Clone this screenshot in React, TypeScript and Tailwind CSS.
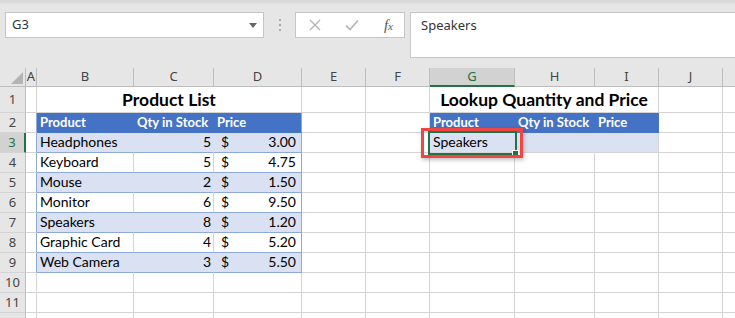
import React from "react";
import clsx from "clsx";

const rGray = "border-r-[#d4d4d4]";
const rBlue = "border-r-[#8ea9db]";
const rNone = "border-r-transparent";
const bGray = "border-b-[#d4d4d4]";
const bBlue = "border-b-[#8ea9db]";
const bNone = "border-b-transparent";

const band = "bg-[#d9e1f2]";
const head = "bg-[#4472c4] text-white font-bold";
const headSize = "text-[13px] leading-[18px]";
const titleSize = "text-[17.5px] leading-[22px]";

const products: [string, number, string][] = [
  ["Headphones", 5, "3.00"],
  ["Keyboard", 5, "4.75"],
  ["Mouse", 2, "1.50"],
  ["Monitor", 6, "9.50"],
  ["Speakers", 8, "1.20"],
  ["Graphic Card", 4, "5.20"],
  ["Web Camera", 3, "5.50"],
];

type CellProps = {
  w: string;
  r?: string;
  b?: string;
  size?: string;
  cls?: string;
  children?: React.ReactNode;
};

const Cell = ({ w, r = rGray, b = bGray, size = "text-[14px] leading-[18px]", cls, children }: CellProps) => (
  <div
    className={clsx(
      "h-full shrink-0 border-r border-b flex items-end pb-[1px] text-black whitespace-nowrap overflow-hidden",
      w,
      r,
      b,
      size,
      cls
    )}
  >
    {children}
  </div>
);

const RowHead = ({ n, selected }: { n?: number; selected?: boolean }) => (
  <div
    className={clsx(
      "h-full w-[26px] shrink-0 border-b border-b-[#d4d4d4] flex items-center justify-center text-[13px] font-['Noto_Sans',sans-serif]",
      selected
        ? "bg-[#d2d2d2] border-r-2 border-r-[#217346] text-[#217346]"
        : "bg-[#e6e6e6] border-r border-r-[#bdbdbd] text-[#444]"
    )}
  >
    {n}
  </div>
);

const Row = ({
  n,
  h = "h-[20px]",
  selected,
  children,
}: {
  n?: number;
  h?: string;
  selected?: boolean;
  children: React.ReactNode;
}) => (
  <div className={clsx("flex", h)}>
    <RowHead n={n} selected={selected} />
    {children}
  </div>
);

// empty cells J and the edge of K
const Tail = () => (
  <>
    <Cell w="w-[64px]" />
    <Cell w="w-[40px]" />
  </>
);

const colHeads = [
  { k: "A", w: "w-[11px]" },
  { k: "B", w: "w-[97px]" },
  { k: "C", w: "w-[80px]" },
  { k: "D", w: "w-[88px]" },
  { k: "E", w: "w-[64px]" },
  { k: "F", w: "w-[64px]" },
  { k: "G", w: "w-[85px]" },
  { k: "H", w: "w-[80px]" },
  { k: "I", w: "w-[64px]" },
  { k: "J", w: "w-[64px]" },
  { k: "", w: "w-[40px]" },
];

export default function App() {
  return (
    <div className="relative w-[735px] h-[318px] overflow-hidden bg-white font-['Lato',sans-serif]">
      {/* formula bar */}
      <div className="h-[68px] bg-[#e6e6e6] border-t-[3px] border-t-[#d9d9d9] flex items-start pt-[9px] pl-[5px] font-['Noto_Sans',sans-serif]">
        <div className="w-[259px] h-[26px] bg-white border border-[#c6c6c6] flex items-center justify-between pl-[6px] pr-[6px]">
          <span className="text-[13px] text-[#333]">G3</span>
          <svg width="8" height="5" viewBox="0 0 8 5">
            <path d="M0 0h8L4 5z" fill="#666" />
          </svg>
        </div>
        <div className="w-[31px] h-[26px] flex flex-col items-center justify-center gap-[3px]">
          <div className="w-[2px] h-[2px] bg-[#aaa]" />
          <div className="w-[2px] h-[2px] bg-[#aaa]" />
          <div className="w-[2px] h-[2px] bg-[#aaa]" />
        </div>
        <div className="w-[110px] h-[26px] bg-white border border-[#c6c6c6] flex items-center justify-between pl-[13px] pr-[11px]">
          <svg width="12" height="12" viewBox="0 0 12 12">
            <path d="M1 1l10 10M11 1L1 11" stroke="#b4b4b4" strokeWidth="1.3" />
          </svg>
          <svg width="14" height="12" viewBox="0 0 14 12">
            <path d="M1 6.5l4 4L13 1.5" stroke="#b4b4b4" strokeWidth="1.6" fill="none" />
          </svg>
          <span className="font-['Liberation_Serif',serif] italic text-[15px] text-[#555] leading-none">
            f<span className="text-[11px]">x</span>
          </span>
        </div>
        <div className="ml-[5px] flex-1 h-[46px] bg-white border border-r-0 border-[#c6c6c6] pl-[10px] pt-[3px] text-[13px] text-[#333]">
          Speakers
        </div>
      </div>

      {/* column headers */}
      <div className="flex h-[19px] bg-[#e6e6e6] font-['Noto_Sans',sans-serif] text-[13px] text-[#444]">
        <div className="w-[26px] shrink-0 h-full border-r border-b border-[#bdbdbd] flex items-end justify-end pr-[2px] pb-[2px]">
          <svg width="12" height="12" viewBox="0 0 12 12">
            <path d="M12 0v12H0z" fill="#b4b4b4" />
          </svg>
        </div>
        {colHeads.map((c) => (
          <div
            key={c.w + c.k}
            className={clsx(
              "h-full shrink-0 border-r border-r-[#bdbdbd] flex items-center justify-center",
              c.w,
              c.k === "G"
                ? "bg-[#d2d2d2] border-b-2 border-b-[#217346] text-[#217346]"
                : "border-b border-b-[#bdbdbd]"
            )}
          >
            {c.k}
          </div>
        ))}
      </div>

      {/* row 1: titles */}
      <Row n={1} h="h-[26px]">
        <Cell w="w-[11px]" />
        <Cell w="w-[265px]" size={titleSize} cls="justify-center font-bold">
          Product List
        </Cell>
        <Cell w="w-[64px]" />
        <Cell w="w-[64px]" />
        <Cell w="w-[229px]" size={titleSize} cls="justify-center font-bold">
          Lookup Quantity and Price
        </Cell>
        <Tail />
      </Row>

      {/* row 2: table headers */}
      <Row n={2}>
        <Cell w="w-[11px]" r={rBlue} />
        <Cell w="w-[97px]" r={rNone} b={bNone} size={headSize} cls={clsx(head, "pl-[3px]")}>
          Product
        </Cell>
        <Cell w="w-[80px]" r={rNone} b={bNone} size={headSize} cls={clsx(head, "pl-[3px]")}>
          Qty in Stock
        </Cell>
        <Cell w="w-[88px]" r={rBlue} b={bNone} size={headSize} cls={clsx(head, "pl-[3px]")}>
          Price
        </Cell>
        <Cell w="w-[64px]" />
        <Cell w="w-[64px]" />
        <Cell w="w-[85px]" r={rNone} b={bNone} size={headSize} cls={clsx(head, "pl-[3px]")}>
          Product
        </Cell>
        <Cell w="w-[80px]" r={rNone} b={bNone} size={headSize} cls={clsx(head, "pl-[3px]")}>
          Qty in Stock
        </Cell>
        <Cell w="w-[64px]" r={rNone} b={bNone} size={headSize} cls={clsx(head, "pl-[3px]")}>
          Price
        </Cell>
        <Tail />
      </Row>

      {/* rows 3-9 */}
      {products.map(([name, qty, price], i) => {
        const banded = i % 2 === 0;
        const fill = banded ? band : "bg-white";
        const inner = banded ? rNone : rGray;
        return (
          <Row key={name} n={i + 3} selected={i === 0}>
            <Cell w="w-[11px]" r={rBlue} />
            <Cell w="w-[97px]" r={inner} b={bBlue} cls={clsx(fill, "pl-[3px]")}>
              {name}
            </Cell>
            <Cell w="w-[80px]" r={inner} b={bBlue} cls={clsx(fill, "justify-end pr-[2px]")}>
              {qty}
            </Cell>
            <Cell w="w-[88px]" r={rBlue} b={bBlue} cls={clsx(fill, "justify-between pl-[7px] pr-[5px]")}>
              <span>$</span>
              <span>{price}</span>
            </Cell>
            <Cell w="w-[64px]" />
            <Cell w="w-[64px]" />
            {i === 0 ? (
              <>
                <Cell w="w-[85px]" r={rNone} cls={clsx(band, "pl-[3px]")}>
                  Speakers
                </Cell>
                <Cell w="w-[80px]" r={rNone} cls={band} />
                <Cell w="w-[64px]" cls={band} />
              </>
            ) : (
              <>
                <Cell w="w-[85px]" />
                <Cell w="w-[80px]" />
                <Cell w="w-[64px]" />
              </>
            )}
            <Tail />
          </Row>
        );
      })}

      {/* rows 10-12 empty; 12 is cut by the window edge */}
      {[10, 11, undefined].map((n, idx) => (
        <Row key={idx} n={n}>
          <Cell w="w-[11px]" />
          <Cell w="w-[97px]" />
          <Cell w="w-[80px]" />
          <Cell w="w-[88px]" />
          <Cell w="w-[64px]" />
          <Cell w="w-[64px]" />
          <Cell w="w-[85px]" />
          <Cell w="w-[80px]" />
          <Cell w="w-[64px]" />
          <Tail />
        </Row>
      ))}

      {/* active cell G3 */}
      <div className="absolute left-[428px] top-[131px] w-[89px] h-[24px] border-2 border-[#217346]" />
      <div className="absolute left-[512px] top-[150px] w-[7px] h-[7px] bg-[#217346] border border-white" />
      {/* annotation box */}
      <div className="absolute left-[421px] top-[128px] w-[102px] h-[30px] border-[3px] border-[#f04545] shadow-[1px_2px_4px_rgba(0,0,0,0.25)]" />
    </div>
  );
}
